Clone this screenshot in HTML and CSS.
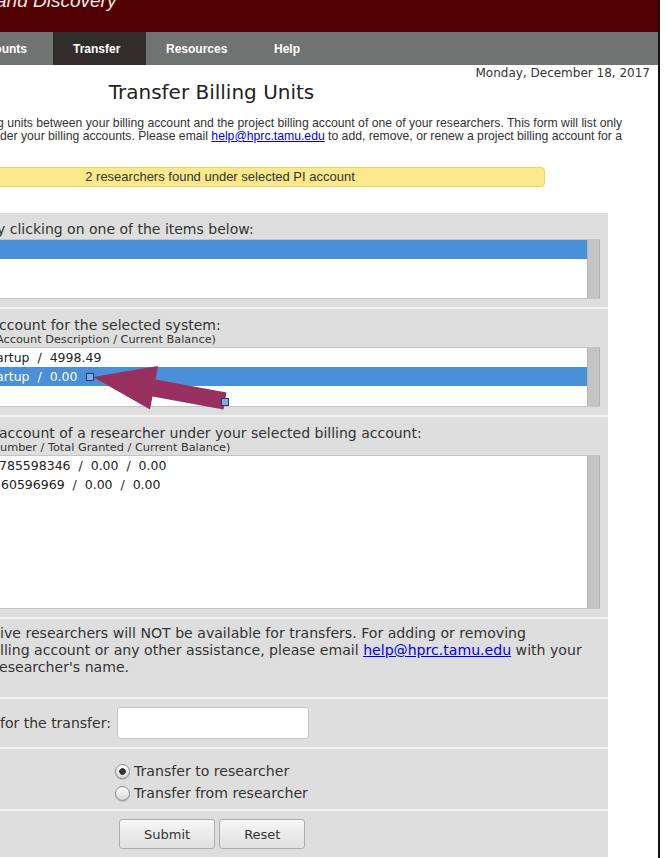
FILE: index.html
```html
<!DOCTYPE html>
<html lang="en">
<head>
<meta charset="utf-8">
<title>Transfer Billing Units</title>
<link rel="stylesheet" href="styles.css">
</head>
<body>
<div class="frame">
  <header class="brand"><div class="brand-text">and Discovery</div></header>
  <nav class="nav">
    <a class="tab tab-cut"><span>Accounts</span></a>
    <a class="tab tab-active w93">Transfer</a>
    <a class="tab w108">Resources</a>
    <a class="tab">Help</a>
  </nav>
  <main class="main">
    <div class="date">Monday, December 18, 2017</div>
    <h1 class="title">Transfer Billing Units</h1>
    <div class="intro">
      <div class="line cut3">g units between your billing account and the project billing account of one of your researchers. This form will list only</div>
      <div class="line">der your billing accounts. Please email <a class="link" href="#">help@hprc.tamu.edu</a> to add, remove, or renew a project billing account for a</div>
    </div>
    <div class="alert">2 researchers found under selected PI account</div>

    <form class="panel">
      <section class="sec">
        <div class="label cut3">y clicking on one of the items below:</div>
        <div class="listbox h60">
          <div class="rows"><div class="row sel"> </div></div>
          <div class="scroll"></div>
        </div>
      </section>

      <section class="sec">
        <div class="label cut1">ccount for the selected system:</div>
        <div class="sub cut4">Account Description / Current Balance)</div>
        <div class="listbox h60">
          <div class="rows">
            <div class="row cut4">artup  /  4998.49</div>
            <div class="row sel cut4">artup  /  0.00</div>
          </div>
          <div class="scroll"></div>
        </div>
      </section>

      <section class="sec">
        <div class="label cut1">account of a researcher under your selected billing account:</div>
        <div class="sub">umber / Total Granted / Current Balance)</div>
        <div class="listbox h154">
          <div class="rows">
            <div class="row cut1">785598346  /  0.00  /  0.00</div>
            <div class="row in1">60596969  /  0.00  /  0.00</div>
          </div>
          <div class="scroll"></div>
        </div>
      </section>

      <section class="sec note">
        <div class="line">ive researchers will NOT be available for transfers. For adding or removing</div>
        <div class="line">lling account or any other assistance, please email <a class="link" href="#">help@hprc.tamu.edu</a> with your</div>
        <div class="line cut1">esearcher's name.</div>
      </section>

      <section class="sec field">
        <label class="field-label" for="amount">for the transfer:</label>
        <input class="text-input" id="amount" type="text">
      </section>

      <section class="sec radios">
        <label class="radio-row"><input class="radio" type="radio" name="dir" checked>Transfer to researcher</label>
        <label class="radio-row"><input class="radio" type="radio" name="dir">Transfer from researcher</label>
      </section>

      <section class="sec actions">
        <button class="btn" type="button">Submit</button>
        <button class="btn" type="reset">Reset</button>
      </section>
    </form>
  </main>

  <svg class="annot" width="666" height="858" viewBox="0 0 666 858" aria-hidden="true">
    <polygon points="93,377 158,366 155.5,379.6 226.5,392.6 223.5,409.4 152.5,396.4 150,409.6" fill="#97305f"/>
    <rect x="86.5" y="373.5" width="7" height="7" fill="#8ea8d8" stroke="#1f3c78" stroke-width="1"/>
    <rect x="221.5" y="398.5" width="7" height="7" fill="#8ea8d8" stroke="#1f3c78" stroke-width="1"/>
  </svg>
</div>
</body>
</html>
```

FILE: styles.css
```css
html, body {
  margin: 0;
  padding: 0;
  background: #ffffff;
}

body {
  width: 666px;
  height: 858px;
  overflow: hidden;
  font-family: "DejaVu Sans", sans-serif;
  color: #333333;
}

.frame {
  position: relative;
  width: 658px;
  min-height: 858px;
  border-right: 2px solid #111111;
  background: #ffffff;
  overflow: hidden;
}

/* header */
.brand {
  height: 32px;
  background: #500000;
  overflow: hidden;
}

.brand-text {
  margin-top: -9px;
  text-indent: -4px;
  font-family: "Liberation Sans", sans-serif;
  font-style: italic;
  font-size: 19px;
  line-height: 19px;
  color: #f2e8e8;
  white-space: nowrap;
}

/* nav */
.nav {
  display: flex;
  height: 33px;
  background: #6f7473;
}

.tab {
  display: flex;
  align-items: center;
  box-sizing: border-box;
  padding: 0 25px 0 20px;
  font-family: "Liberation Sans", sans-serif;
  font-weight: bold;
  font-size: 12px;
  color: #ffffff;
  white-space: nowrap;
  flex-shrink: 0;
}

.w93 { width: 93px; }
.w108 { width: 108px; }

.tab-cut {
  width: 53px;
  padding: 0 26px 0 0;
  justify-content: flex-end;
}

.tab-cut span {
  flex-shrink: 0;
}

.tab-active {
  background: #322d2d;
}

/* main */
.main {
  display: flex;
  flex-direction: column;
  align-items: flex-start;
}

.date {
  align-self: stretch;
  margin-top: 1px;
  padding-right: 8px;
  text-align: right;
  font-size: 12px;
  line-height: 14px;
  color: #333333;
}

.title {
  width: 423px;
  margin: 0;
  text-align: center;
  font-size: 20px;
  font-weight: normal;
  line-height: 24px;
  color: #222222;
}

.intro {
  margin-top: 13px;
  font-family: "Liberation Sans", sans-serif;
  font-size: 12.2px;
  line-height: 13px;
  color: #333333;
}

.line {
  white-space: nowrap;
}

.link {
  color: #0000ee;
  text-decoration: underline;
}

.alert {
  box-sizing: border-box;
  width: 650px;
  height: 20px;
  margin: 24px 0 0 -105px;
  background: #fbe98b;
  border: 1px solid #f1d45a;
  border-radius: 4px;
  text-align: center;
  font-family: "Liberation Sans", sans-serif;
  font-size: 13px;
  line-height: 18px;
  color: #333333;
}

/* form panel */
.panel {
  display: flex;
  flex-direction: column;
  gap: 2px;
  width: 608px;
  margin: 26px 0 0 0;
  background: #f3f3f3;
}

.sec {
  background: #dedede;
  padding: 8px 0;
}

.label {
  font-size: 14px;
  line-height: 17px;
  color: #333333;
  white-space: nowrap;
}

.sub {
  font-size: 11.3px;
  line-height: 12px;
  color: #333333;
  white-space: nowrap;
}

.cut1 { text-indent: -1px; }
.cut3 { text-indent: -3px; }
.cut4 { text-indent: -4px; }
.in1 { text-indent: 1px; }

.listbox {
  display: flex;
  box-sizing: border-box;
  width: 600px;
  margin-top: 1px;
  background: #ffffff;
  border-top: 1px solid #c3c3c3;
  border-bottom: 1px solid #c3c3c3;
}

.h60 { height: 60px; }
.h154 { height: 154px; }

.rows {
  flex: 1;
  overflow: hidden;
}

.row {
  height: 19px;
  font-size: 12.5px;
  line-height: 19px;
  white-space: pre;
  color: #222222;
}

.row.sel {
  background: #4a90d9;
  color: #ffffff;
}

.scroll {
  width: 11px;
  background: #c3c4c3;
  border-left: 1px solid #b3b3b3;
  border-right: 1px solid #b3b3b3;
}

.note {
  padding: 6px 0 21px;
  font-size: 14.1px;
  line-height: 17px;
  color: #333333;
}

.field {
  display: flex;
  align-items: center;
  gap: 9px;
}

.field-label {
  width: 108px;
  text-align: right;
  font-size: 14px;
  white-space: nowrap;
  color: #333333;
}

.text-input {
  box-sizing: border-box;
  width: 192px;
  height: 32px;
  margin: 0;
  border: 1px solid #c6c6c6;
  border-radius: 3px;
  background: #ffffff;
}

.radios {
  padding: 11px 0 5px;
}

.radio-row {
  display: flex;
  align-items: center;
  height: 22px;
  padding-left: 115px;
  font-size: 14.1px;
  color: #333333;
}

.radio {
  appearance: none;
  -webkit-appearance: none;
  box-sizing: border-box;
  width: 15px;
  height: 15px;
  margin: 0 4px 0 0;
  border: 1px solid #8c8c8c;
  border-radius: 50%;
  background: linear-gradient(#ffffff, #d6d6d6);
  box-shadow: 0 1px 1px rgba(0, 0, 0, 0.15);
}

.radio:checked {
  background: radial-gradient(circle, #333333 0 3px, transparent 3.6px), linear-gradient(#ffffff, #d6d6d6);
}

.actions {
  display: flex;
  gap: 4px;
  padding: 8px 0 8px 119px;
}

.btn {
  height: 30px;
  margin: 0;
  padding: 0 24px;
  font-family: "DejaVu Sans", sans-serif;
  font-size: 13px;
  color: #333333;
  border: 1px solid #adadad;
  border-radius: 3px;
  background: linear-gradient(#f7f7f7, #e0e0e0);
}

/* annotation overlay */
.annot {
  position: absolute;
  left: 0;
  top: 0;
  pointer-events: none;
}
```
